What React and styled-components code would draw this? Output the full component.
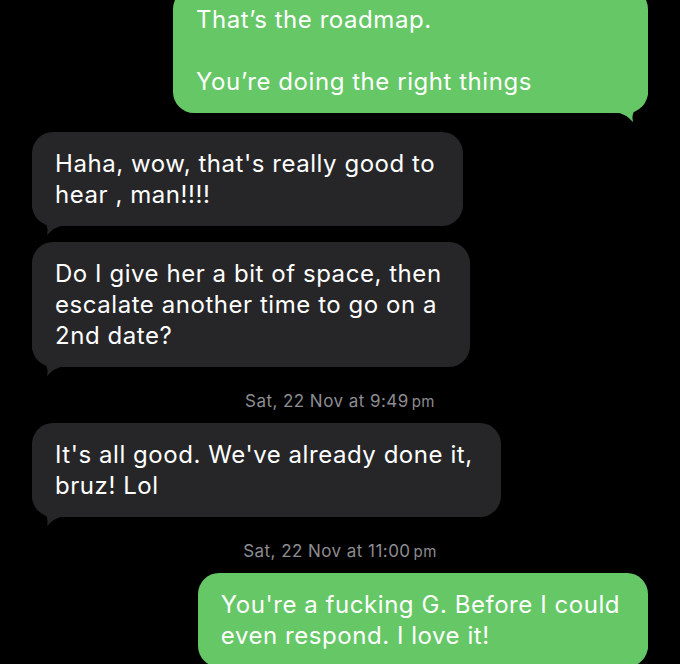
import styled, { createGlobalStyle } from 'styled-components';

const GlobalStyle = createGlobalStyle`
  html, body {
    margin: 0;
    padding: 0;
    background: #000;
    overflow: hidden;
  }
  body {
    font-family: 'Inter', 'Roboto', sans-serif;
    -webkit-font-smoothing: antialiased;
  }
`;

const Screen = styled.div`
  width: 680px;
  height: 664px;
  overflow: hidden;
  background: #000;
`;

const Thread = styled.div`
  display: flex;
  flex-direction: column;
  padding: 0 32px;
  margin-top: -12px;
`;

const Row = styled.div`
  display: flex;
  justify-content: ${({ $mine }) => ($mine ? 'flex-end' : 'flex-start')};
  margin-top: ${({ $gap }) => $gap}px;
`;

const Bubble = styled.div`
  position: relative;
  box-sizing: border-box;
  width: ${({ $width }) => ($width ? `${$width}px` : 'auto')};
  padding: 16px 28px 16px 23px;
  border-radius: 21px;
  background: ${({ $mine }) => ($mine ? '#66c767' : '#262628')};
  color: #fff;
  font-size: 24px;
  line-height: 31px;
  letter-spacing: 0.55px;
  white-space: pre-line;
`;

const Tail = styled.svg`
  position: absolute;
  bottom: -11px;
  width: 32px;
  height: 34px;
  ${({ $mine }) =>
    $mine ? 'right: 0;' : 'left: 0; transform: scaleX(-1);'}
`;

const Stamp = styled.div`
  text-align: center;
  color: #8d8d92;
  font-size: 17px;
  line-height: 20px;
  height: 20px;
  margin: 24px 0 12px;
  letter-spacing: 0.45px;
`;

const Meridiem = styled.span`
  font-size: 15px;
  line-height: 1;
  margin-left: 3px;
`;

function BubbleTail({ mine }) {
  return (
    <Tail $mine={mine} viewBox='0 0 32 34'>
      <path
        d='M0 22 Q10 24 17 32 Q15 24 20 19 Q28 14 32 4 L32 0 L0 0 Z'
        fill={mine ? '#66c767' : '#262628'}
      />
    </Tail>
  );
}

function Message({ mine, gap, width, tail = true, children }) {
  return (
    <Row $mine={mine} $gap={gap}>
      <Bubble $mine={mine} $width={width}>
        {children}
        {tail && <BubbleTail mine={mine} />}
      </Bubble>
    </Row>
  );
}

function Timestamp({ day, time }) {
  return (
    <Stamp>
      {day} at {time}
      <Meridiem>pm</Meridiem>
    </Stamp>
  );
}

const messages = [
  {
    mine: true,
    gap: 0,
    width: 475,
    text: 'That’s the roadmap.\n\u00a0\nYou’re doing the right things',
  },
  { mine: false, gap: 19, text: "Haha, wow, that's really good to\nhear , man!!!!" },
  {
    mine: false,
    gap: 16,
    text: 'Do I give her a bit of space, then\nescalate another time to go on a\n2nd date?',
  },
  { stamp: true, time: '9:49' },
  { mine: false, gap: 0, text: "It's all good. We've already done it,\nbruz! Lol" },
  { stamp: true, time: '11:00' },
  {
    mine: true,
    gap: 0,
    text: "You're a fucking G. Before I could\neven respond. I love it!",
  },
];

export default function App() {
  return (
    <>
      <GlobalStyle />
      <Screen>
        <Thread>
          {messages.map((m, i) =>
            m.stamp ? (
              <Timestamp key={i} day='Sat, 22 Nov' time={m.time} />
            ) : (
              <Message key={i} mine={m.mine} gap={m.gap} width={m.width}>
                {m.text}
              </Message>
            )
          )}
        </Thread>
      </Screen>
    </>
  );
}
